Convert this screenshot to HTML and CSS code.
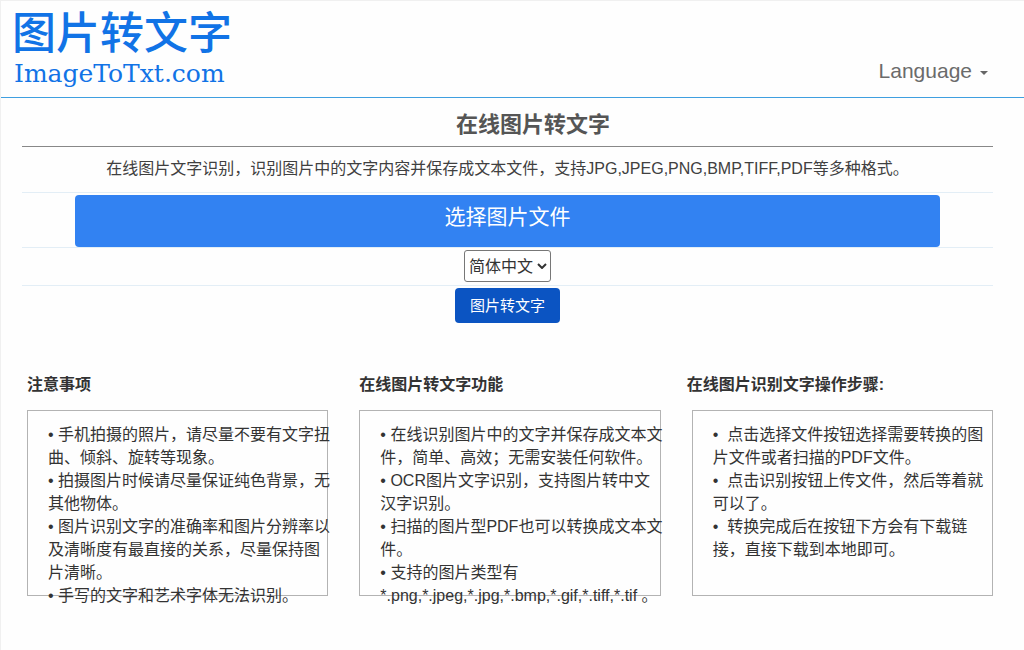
FILE: index.html
```html
<!DOCTYPE html>
<html lang="zh-CN">
<head>
<meta charset="utf-8">
<title>在线图片转文字</title>
<link rel="stylesheet" href="styles.css">
</head>
<body>
<header class="header">
  <a class="logo" href="#"><span class="logo-name">图片转文字</span><span class="logo-domain">ImageToTxt.com</span></a>
  <button class="language" type="button">Language <span class="caret"></span></button>
</header>
<main>
  <form class="converter">
    <h1 class="title">在线图片转文字</h1>
    <p class="intro">在线图片文字识别，识别图片中的文字内容并保存成文本文件，支持JPG,JPEG,PNG,BMP,TIFF,PDF等多种格式。</p>
    <div class="row"><button class="choose" type="button">选择图片文件</button></div>
    <div class="row row-select">
      <span class="select-wrap">
        <select class="select" aria-label="识别语言"><option>简体中文</option></select>
        <svg class="chevron" viewBox="0 0 10 6" aria-hidden="true"><path d="M1 1l4 4 4-4"/></svg>
      </span>
    </div>
    <div class="row row-submit"><button class="submit" type="button">图片转文字</button></div>
  </form>
  <div class="columns">
    <section>
      <h2 class="heading">注意事项</h2>
      <div class="box"><p class="notes">• 手机拍摄的照片，请尽量不要有文字扭<br>曲、倾斜、旋转等现象。<br>• 拍摄图片时候请尽量保证纯色背景，无<br>其他物体。<br>• 图片识别文字的准确率和图片分辨率以<br>及清晰度有最直接的关系，尽量保持图<br>片清晰。<br>• 手写的文字和艺术字体无法识别。</p></div>
    </section>
    <section>
      <h2 class="heading">在线图片转文字功能</h2>
      <div class="box"><p class="notes">• 在线识别图片中的文字并保存成文本文<br>件，简单、高效；无需安装任何软件。<br>• OCR图片文字识别，支持图片转中文<br>汉字识别。<br>• 扫描的图片型PDF也可以转换成文本文<br>件。<br>• 支持的图片类型有<br>*.png,*.jpeg,*.jpg,*.bmp,*.gif,*.tiff,*.tif 。</p></div>
    </section>
    <section>
      <h2 class="heading heading-steps">在线图片识别文字操作步骤:</h2>
      <div class="box"><p class="notes">•&nbsp; 点击选择文件按钮选择需要转换的图<br>片文件或者扫描的PDF文件。<br>•&nbsp; 点击识别按钮上传文件，然后等着就<br>可以了。<br>•&nbsp; 转换完成后在按钮下方会有下载链<br>接，直接下载到本地即可。</p></div>
    </section>
  </div>
</main>
</body>
</html>
```
FILE: styles.css
```css
* { box-sizing: border-box; }
html { background: #fefefe; }
body {
  margin: 0;
  min-height: 100vh;
  border-top: 1px solid #f0f0f0;
  border-left: 1px solid #f0f0f0;
  font: 16px/23px "Liberation Sans", "Noto Sans CJK SC", sans-serif;
  color: #333;
}
button, select { font-family: inherit; }
.header {
  display: flex;
  justify-content: space-between;
  align-items: flex-end;
  padding: 9px 36px 8px 11px;
  border-bottom: 1px solid #3f9fe0;
}
.logo {
  display: flex;
  flex-direction: column;
  color: #1173e6;
  text-decoration: none;
}
.logo-name { font-size: 44px; line-height: 48px; font-weight: 500; }
.logo-domain { padding-left: 2px; font: 25px/31px "DejaVu Serif", serif; }
.language {
  display: flex;
  align-items: center;
  gap: 8px;
  padding: 0;
  margin-bottom: 6px;
  border: 0;
  background: none;
  font-size: 21px;
  line-height: 24px;
  color: #6b6b6b;
}
.caret {
  margin-top: 4px;
  border: 4px solid transparent;
  border-top-color: #666;
  border-bottom: 0;
}
.converter { padding: 0 31px 0 21px; }
.title {
  margin: 0;
  padding: 13px 0 7px 51px;
  border-bottom: 1px solid #888;
  font-size: 22px;
  line-height: 28px;
  text-align: center;
  color: #555;
}
.intro { margin: 0; padding: 10px 0 12px; text-align: center; white-space: nowrap; color: #404040; }
.row {
  display: flex;
  justify-content: center;
  padding-top: 2px;
  border-top: 1px solid #e3eef6;
}
.choose {
  width: 89%;
  padding: 8px 0 16px;
  border: 0;
  border-radius: 4px;
  background: #3282f2;
  color: #fff;
  font-size: 21px;
  line-height: 28px;
}
.row-select { padding-bottom: 3px; }
.select-wrap { position: relative; }
.select {
  display: block;
  appearance: none;
  height: 32px;
  padding: 0 16px 0 4px;
  border: 1px solid #777;
  border-radius: 3px;
  background: #fff;
  color: #333;
  font-size: 16px;
}
.chevron {
  position: absolute;
  right: 4px;
  top: 13px;
  width: 10px;
  height: 6px;
  fill: none;
  stroke: #333;
  stroke-width: 2;
  pointer-events: none;
}
.submit {
  padding: 6px 15px;
  border: 0;
  border-radius: 4px;
  background: #0b54c2;
  color: #fff;
  font-size: 15px;
  line-height: 23px;
}
.row-submit { border-top-color: #e3eef6; }
.columns {
  display: grid;
  grid-template-columns: repeat(3, minmax(0, 1fr));
  gap: 31px;
  padding: 50px 31px 24px 26px;
}
.heading { margin: 0 0 14px; font-size: 16px; line-height: 23px; white-space: nowrap; }
.heading-steps { margin-left: -5px; }
.box { height: 186px; border: 1px solid #b3b3b3; }
.notes { margin: 0; padding: 12px 0 0 20px; white-space: nowrap; }
```
